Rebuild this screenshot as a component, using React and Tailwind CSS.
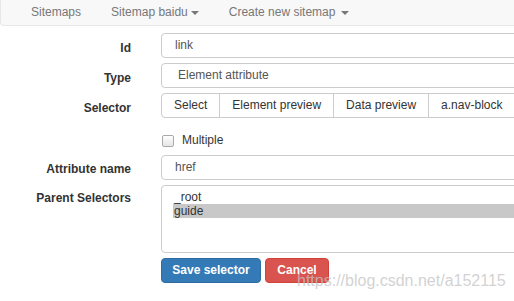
const navItems = [
  { label: 'Sitemaps', caret: false },
  { label: 'Sitemap baidu', caret: 'tight' },
  { label: 'Create new sitemap', caret: 'space' },
];

const selectorButtons = ['Select', 'Element preview', 'Data preview', 'a.nav-block'];

function Caret({ spaced }) {
  return (
    <span
      className={`inline-block w-0 h-0 border-x-[4px] border-x-transparent border-t-[4px] border-t-[#777] align-middle ${
        spaced ? 'ml-[6px]' : 'ml-[3px]'
      }`}
    />
  );
}

function Label({ children, pad = 'pt-[7px]' }) {
  return (
    <label className={`w-[131px] shrink-0 text-right font-bold text-[#333] leading-[17px] ${pad}`}>
      {children}
    </label>
  );
}

export default function App() {
  return (
    <div className="relative w-[514px] h-[301px] overflow-hidden bg-white font-['Liberation_Sans',Arial,sans-serif] text-[12px] leading-[17px]">
      {/* Navbar */}
      <nav className="h-[26px] w-[560px] flex items-center pl-[15px] bg-[#f8f8f8] border-b border-l border-[#e7e7e7] rounded-bl-[4px] text-[#777]">
        {navItems.map((item) => (
          <span key={item.label} className="px-[15px] flex items-center whitespace-nowrap">
            {item.label}
            {item.caret && <Caret spaced={item.caret === 'space'} />}
          </span>
        ))}
      </nav>

      {/* Form */}
      <div className="pt-[7px] flex flex-col">
        <div className="flex h-[25px]">
          <Label>Id</Label>
          <div className="ml-[30px] w-[420px] h-[25px] shrink-0 flex items-center pl-[13px] border border-[#ccc] rounded-[4px] text-[#555]">
            link
          </div>
        </div>

        <div className="flex h-[25px] mt-[5px]">
          <Label>Type</Label>
          <div className="ml-[30px] w-[420px] h-[25px] shrink-0 flex items-center pl-[16px] border border-[#ccc] rounded-[4px] text-[#555]">
            Element attribute
          </div>
        </div>

        <div className="flex h-[25px] mt-[5px]">
          <Label>Selector</Label>
          <div className="ml-[30px] shrink-0 flex h-[25px]">
            {selectorButtons.map((b, i) => (
              <span
                key={b}
                className={`flex items-center px-[12px] border border-[#ccc] bg-white text-[#333] whitespace-nowrap ${
                  i === 0 ? 'rounded-l-[4px]' : '-ml-px'
                } ${i === 3 ? 'w-[120px]' : ''}`}
              >
                {b}
              </span>
            ))}
          </div>
        </div>

        <div className="flex items-start h-[12px] mt-[17px] pl-[162px]">
          <span className="w-[12px] h-[12px] rounded-[2px] border border-[#a9a9a9] bg-gradient-to-b from-white to-[#e6e6e6]" />
          <span className="ml-[8px] -mt-[2px] text-[#333] leading-[14px]">Multiple</span>
        </div>

        <div className="flex h-[25px] mt-[8px]">
          <Label pad="pt-[6px]">Attribute name</Label>
          <div className="ml-[30px] w-[420px] h-[25px] shrink-0 flex items-center pl-[13px] border border-[#ccc] rounded-[4px] text-[#555]">
            href
          </div>
        </div>

        <div className="flex h-[68px] mt-[5px]">
          <Label pad="pt-[5px]">Parent Selectors</Label>
          <div className="ml-[30px] w-[420px] h-[68px] shrink-0 border border-[#ccc] rounded-[4px] pt-[4px] pl-[11px] text-[#333]">
            <div className="h-[14px] leading-[14px] pl-[1px]">_root</div>
            <div className="h-[14px] leading-[14px] pl-[1px] bg-[#c8c8c8]">guide</div>
          </div>
        </div>

        <div className="flex h-[25px] mt-[5px] pl-[161px]">
          <button className="w-[100px] h-[25px] flex items-center justify-center rounded-[4px] border border-[#2e6da4] bg-[#337ab7] text-white font-bold">
            Save selector
          </button>
          <button className="ml-[4px] w-[64px] h-[25px] flex items-center justify-center rounded-[4px] border border-[#d43f3a] bg-[#d9534f] text-white font-bold">
            Cancel
          </button>
        </div>
      </div>

      {/* Watermark */}
      <span className="absolute left-[297px] top-[271px] text-[16px] leading-[20px] text-[rgba(195,195,195,0.75)] whitespace-nowrap pointer-events-none">
        https://blog.csdn.net/a152115
      </span>
    </div>
  );
}
